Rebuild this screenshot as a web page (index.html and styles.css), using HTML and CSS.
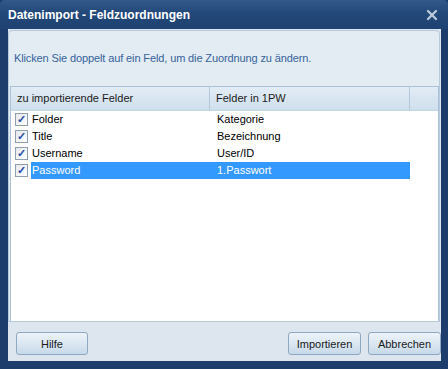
FILE: index.html
```html
<!DOCTYPE html>
<html lang="de">
<head>
    <meta charset="UTF-8">
    <title>Datenimport - Feldzuordnungen</title>
    <link rel="stylesheet" href="styles.css">
</head>
<body>
    <div class="dialog">
        <div class="titlebar">
            <span class="title">Datenimport - Feldzuordnungen</span>
            <svg class="close" width="12" height="12" viewBox="0 0 12 12">
                <path d="M2 2 L10 10 M10 2 L2 10" stroke="#bccadc" stroke-width="2.3" stroke-linecap="round"/>
            </svg>
        </div>
        <div class="client">
            <div class="panel">
                <p class="hint">Klicken Sie doppelt auf ein Feld, um die Zuordnung zu ändern.</p>
                <div class="list">
                    <div class="list-head">
                        <div class="head-col head-src">zu importierende Felder</div>
                        <div class="head-col head-dst">Felder in 1PW</div>
                        <div class="head-col head-rest"></div>
                    </div>
                    <div class="row">
                        <div class="cell-src"><span class="check">&#10003;</span><span class="label">Folder</span></div>
                        <div class="cell-dst">Kategorie</div>
                    </div>
                    <div class="row">
                        <div class="cell-src"><span class="check">&#10003;</span><span class="label">Title</span></div>
                        <div class="cell-dst">Bezeichnung</div>
                    </div>
                    <div class="row">
                        <div class="cell-src"><span class="check">&#10003;</span><span class="label">Username</span></div>
                        <div class="cell-dst">User/ID</div>
                    </div>
                    <div class="row selected">
                        <div class="cell-src"><span class="check">&#10003;</span><span class="label">Password</span></div>
                        <div class="cell-dst">1.Passwort</div>
                    </div>
                </div>
            </div>
            <div class="footer">
                <button class="btn">Hilfe</button>
                <span class="spacer"></span>
                <button class="btn">Importieren</button>
                <button class="btn">Abbrechen</button>
            </div>
        </div>
    </div>
</body>
</html>
```

FILE: styles.css
```css
body {
    margin: 0;
    background: #1d3d6b;
    font-family: "Liberation Sans", Arial, sans-serif;
    font-size: 11px;
}
.dialog {
    width: 448px;
    height: 369px;
    background: #1d3e6c;
    border-radius: 5px 5px 0 0;
    overflow: hidden;
}
.titlebar {
    height: 29px;
    display: flex;
    align-items: center;
    padding: 0 10px 0 8px;
    background: linear-gradient(#33598b, #234a7b 40%, #1e4271);
}
.title {
    flex: 1;
    color: #ffffff;
    font-weight: bold;
    font-size: 12px;
}
.close {
    display: block;
}
.client {
    margin-left: 8px;
    width: 433px;
    height: 332px;
    background: #dde6ef;
    display: flex;
    flex-direction: column;
}
.panel {
    margin: 1px 1px 0 0;
    height: 290px;
    border: 1px solid #b7c9dc;
    border-radius: 4px 4px 0 0;
    background: #e3ebf3;
    display: flex;
    flex-direction: column;
}
.hint {
    margin: 20px 0 21px 5px;
    line-height: 14px;
    color: #36639a;
    letter-spacing: -0.12px;
}
.list {
    flex: 1;
    margin: 0 0 0 1px;
    border: 1px solid #abc1d7;
    border-bottom: none;
    background: #ffffff;
}
.list-head {
    display: flex;
    height: 23px;
    background: linear-gradient(#e2ecf5, #cedfec);
    border-bottom: 1px solid #c4d5e4;
    color: #1b1b1b;
}
.head-col {
    line-height: 23px;
    padding-left: 6px;
    box-sizing: border-box;
}
.head-src {
    width: 199px;
    border-right: 1px solid #b2c8db;
}
.head-dst {
    width: 200px;
    border-right: 1px solid #b2c8db;
}
.head-rest {
    flex: 1;
}
.row {
    display: flex;
    height: 17px;
    line-height: 17px;
    color: #000000;
}
.cell-src {
    width: 199px;
    display: flex;
    align-items: center;
}
.check {
    width: 11px;
    height: 11px;
    margin: 0 3px 0 4px;
    border: 1px solid #8f9fb0;
    background: linear-gradient(135deg, #e6e9ed, #ffffff);
    color: #2a4fa8;
    font-size: 11px;
    font-weight: bold;
    line-height: 11px;
    text-align: center;
}
.label {
    flex: 1;
    padding-left: 1px;
}
.cell-dst {
    width: 200px;
    padding-left: 7px;
    box-sizing: border-box;
}
.selected .label,
.selected .cell-dst {
    background: #3399ff;
    color: #ffffff;
}
.footer {
    display: flex;
    gap: 7px;
    padding: 10px 0 0 8px;
}
.spacer {
    flex: 1;
}
.btn {
    height: 23px;
    padding: 0;
    border: 1px solid #8ea8c1;
    border-radius: 3px;
    background: linear-gradient(#edf3f9, #dbe7f2 50%, #c7d9e9);
    color: #1a1a1a;
    font-family: "Liberation Sans", Arial, sans-serif;
    font-size: 11px;
    width: 73px;
}
.btn:first-child {
    width: 72px;
}
```
